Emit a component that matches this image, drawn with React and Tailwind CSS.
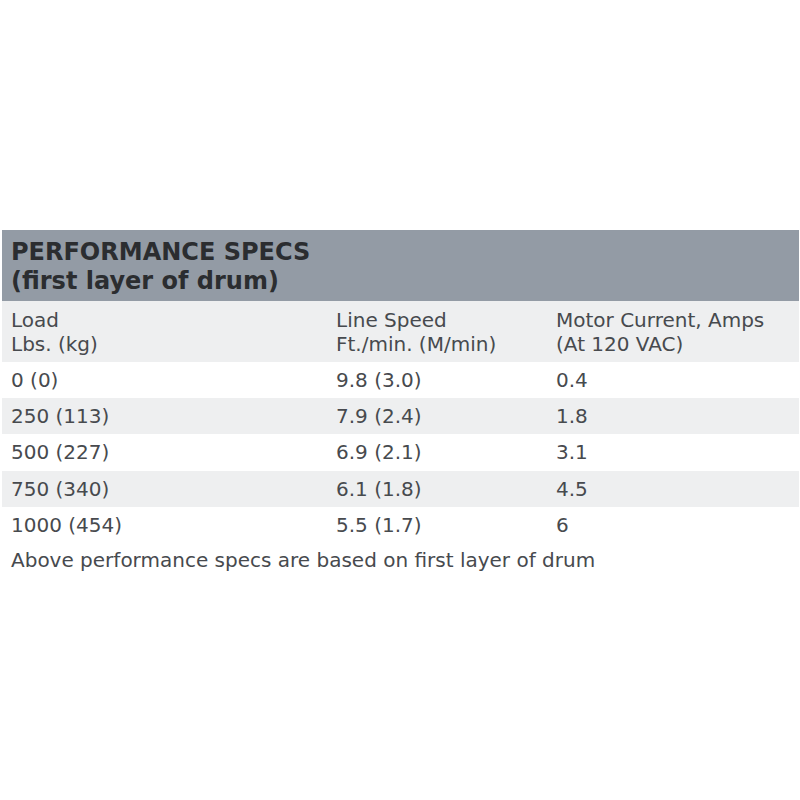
const rows = [
  ["0 (0)", "9.8 (3.0)", "0.4"],
  ["250 (113)", "7.9 (2.4)", "1.8"],
  ["500 (227)", "6.9 (2.1)", "3.1"],
  ["750 (340)", "6.1 (1.8)", "4.5"],
  ["1000 (454)", "5.5 (1.7)", "6"],
];

export default function App() {
  return (
    <div
      className="min-h-[800px] bg-white pt-[230px] pl-[2px] pr-[1px] text-[#474a4e]"
      style={{ fontFamily: '"DejaVu Sans", Verdana, sans-serif' }}
    >
      {/* Title band */}
      <div className="bg-[#939ba5] pl-[9px] pt-[8px] h-[71px]">
        <h2 className="text-[24px] leading-[29px] font-bold text-[#2b2d30]">
          PERFORMANCE SPECS
          <br />
          (first layer of drum)
        </h2>
      </div>

      {/* Column headers */}
      <div className="grid grid-cols-[325px_220px_1fr] bg-[#eeeff0] h-[61px] pt-[7px] text-[20px] leading-[24px]">
        <div className="pl-[9px]">
          Load
          <br />
          Lbs. (kg)
        </div>
        <div className="pl-[9px]">
          Line Speed
          <br />
          Ft./min. (M/min)
        </div>
        <div className="pl-[9px]">
          Motor Current, Amps
          <br />
          (At 120 VAC)
        </div>
      </div>

      {/* Data rows */}
      {rows.map((r, i) => (
        <div
          key={i}
          className={
            "grid grid-cols-[325px_220px_1fr] items-center h-[36.2px] text-[20px] leading-[24px] " +
            (i % 2 === 1 ? "bg-[#eeeff0]" : "bg-white")
          }
        >
          <div className="pl-[9px]">{r[0]}</div>
          <div className="pl-[9px]">{r[1]}</div>
          <div className="pl-[9px]">{r[2]}</div>
        </div>
      ))}

      <p className="pl-[9px] pt-[5px] text-[20px] leading-[24px]">
        Above performance specs are based on first layer of drum
      </p>
    </div>
  );
}
